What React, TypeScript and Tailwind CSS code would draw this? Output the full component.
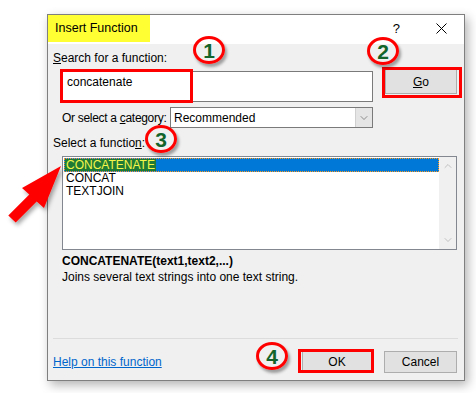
import { ChevronDown, ChevronUp } from "lucide-react";

const font = { fontFamily: '"Liberation Sans", Arial, sans-serif' };

function Marker({ n, className }: { n: string; className: string }) {
    return (
        <div
            className={`absolute w-[32px] h-[28px] rounded-[50%] border-[3px] border-[#ff0000] shadow-[2px_3px_3px_rgba(0,0,0,0.35)] flex items-center justify-center ${className}`}
        >
            <span className="text-[21px] leading-none font-bold text-[#12642a]">{n}</span>
        </div>
    );
}

export default function App() {
    return (
        <div className="relative w-[476px] h-[393px] bg-white overflow-hidden text-[12px] text-black whitespace-nowrap" style={font}>
            {/* dialog */}
            <div className="ml-[47px] mt-[14px] w-[418px] h-[367px] border border-[#7f7f7f] bg-[#f0f0f0] shadow-[3px_4px_10px_rgba(0,0,0,0.3)] flex flex-col">
                {/* title bar */}
                <div className="h-[29px] bg-white flex items-start">
                    <div className="w-[102px] h-[27px] bg-[#ffff33] flex items-center pl-[7px] text-[12.5px]">
                        Insert Function
                    </div>
                    <div className="flex-1" />
                    <div className="h-[27px] flex items-center text-[13px] mr-[36px]">?</div>
                    <div className="h-[27px] flex items-center mr-[17px]">
                        <svg width="11" height="11" viewBox="0 0 11 11">
                            <path d="M0.5 0.5L10.5 10.5M10.5 0.5L0.5 10.5" stroke="#000" strokeWidth="1" />
                        </svg>
                    </div>
                </div>

                {/* body */}
                <div className="flex-1 flex flex-col pl-[5px] pr-[7px]">
                    <div className="mt-[6px] h-[16px] leading-[16px]">
                        <span className="underline">S</span>earch for a function:
                    </div>

                    <div className="mt-[3px] flex items-start">
                        <div className="ml-[9px] mt-[2px] w-[311px] h-[31px] bg-white border border-[#7a7a7a] pl-[4px] pt-[2px] leading-[16px]">
                            concatenate
                        </div>
                        <button className="ml-[12px] w-[72px] h-[25px] bg-[#e1e1e1] border border-[#adadad] flex items-center justify-center">
                            <span><span className="underline">G</span>o</span>
                        </button>
                    </div>

                    <div className="mt-[5px] ml-[9px] flex items-center h-[21px]">
                        <div className="w-[108px] shrink-0 tracking-[-0.3px]">
                            Or select a <span className="underline">c</span>ategory:
                        </div>
                        <div className="w-[203px] h-[21px] bg-white border border-[#7a7a7a] flex items-center">
                            <div className="flex-1 pl-[3px]">Recommended</div>
                            <div className="w-[17px] h-full bg-[#e5e5e5] border-l border-[#d0d0d0] flex items-center justify-center">
                                <ChevronDown size={12} strokeWidth={1.25} color="#555" />
                            </div>
                        </div>
                    </div>

                    <div className="mt-[7px] h-[16px] leading-[16px]">
                        Select a functio<span className="underline">n</span>:
                    </div>

                    <div className="mt-[5px] ml-[9px] w-[395px] h-[94px] bg-white border border-[#828790] flex">
                        <div className="flex-1 pl-[1px] pt-[1px] flex flex-col">
                            <div className="h-[14px] bg-[#0078d7] border border-dotted border-[#ff9a1f] flex items-start overflow-hidden">
                                <span className="bg-[#1e7a35] text-[#f5f54a] h-[12px] leading-[12px] px-[1px] border-b-2 border-[#f2f200] box-content">
                                    CONCATENATE
                                </span>
                            </div>
                            <div className="h-[13px] leading-[13px] pl-[2px]">CONCAT</div>
                            <div className="h-[13px] leading-[13px] pl-[2px]">TEXTJOIN</div>
                        </div>
                        <div className="w-[17px] bg-[#f0f0f0] flex flex-col items-center justify-between py-[3px]">
                            <ChevronUp size={12} strokeWidth={2} color="#c2c2c2" />
                            <ChevronDown size={12} strokeWidth={2} color="#c2c2c2" />
                        </div>
                    </div>

                    <div className="mt-[3px] ml-[9px] h-[16px] leading-[16px] font-bold">
                        CONCATENATE(text1,text2,...)
                    </div>
                    <div className="ml-[9px] h-[16px] leading-[16px]">
                        Joins several text strings into one text string.
                    </div>

                    <div className="flex-1" />
                    <div className="h-px bg-[#dcdcdc] mr-[-1px]" />

                    <div className="mt-[12px] mb-[7px] flex items-center h-[22px]">
                        <a className="text-[#0066cc] underline">Help on this function</a>
                        <div className="flex-1" />
                        <button className="w-[70px] h-[22px] bg-[#e1e1e1] border border-[#adadad]">OK</button>
                        <button className="ml-[12px] w-[73px] h-[22px] bg-[#e1e1e1] border border-[#adadad]">Cancel</button>
                    </div>
                </div>
            </div>

            {/* annotations */}
            <div className="absolute left-[60px] top-[69px] w-[133px] h-[34px] border-[3px] border-[#ff0000]" />
            <div className="absolute left-[382px] top-[67px] w-[80px] h-[31px] border-[3px] border-[#ff0000]" />
            <div className="absolute left-[298px] top-[349px] w-[76px] h-[24px] border-[3px] border-[#ff0000]" />

            <Marker n="1" className="left-[193px] top-[36px]" />
            <Marker n="2" className="left-[367px] top-[37px]" />
            <Marker n="3" className="left-[145px] top-[125px]" />
            <Marker n="4" className="left-[256px] top-[342px]" />

            <svg className="absolute left-0 top-0" width="80" height="240" viewBox="0 0 80 240">
                <defs>
                    <filter id="sh" x="-20%" y="-20%" width="150%" height="150%">
                        <feDropShadow dx="2" dy="3" stdDeviation="2" floodColor="#000" floodOpacity="0.35" />
                    </filter>
                </defs>
                <polygon
                    points="61,166 44,208 36.7,201.4 15.7,222.4 8.3,215.6 29.3,194.6 22,188"
                    fill="#ff0000"
                    filter="url(#sh)"
                />
            </svg>
        </div>
    );
}
